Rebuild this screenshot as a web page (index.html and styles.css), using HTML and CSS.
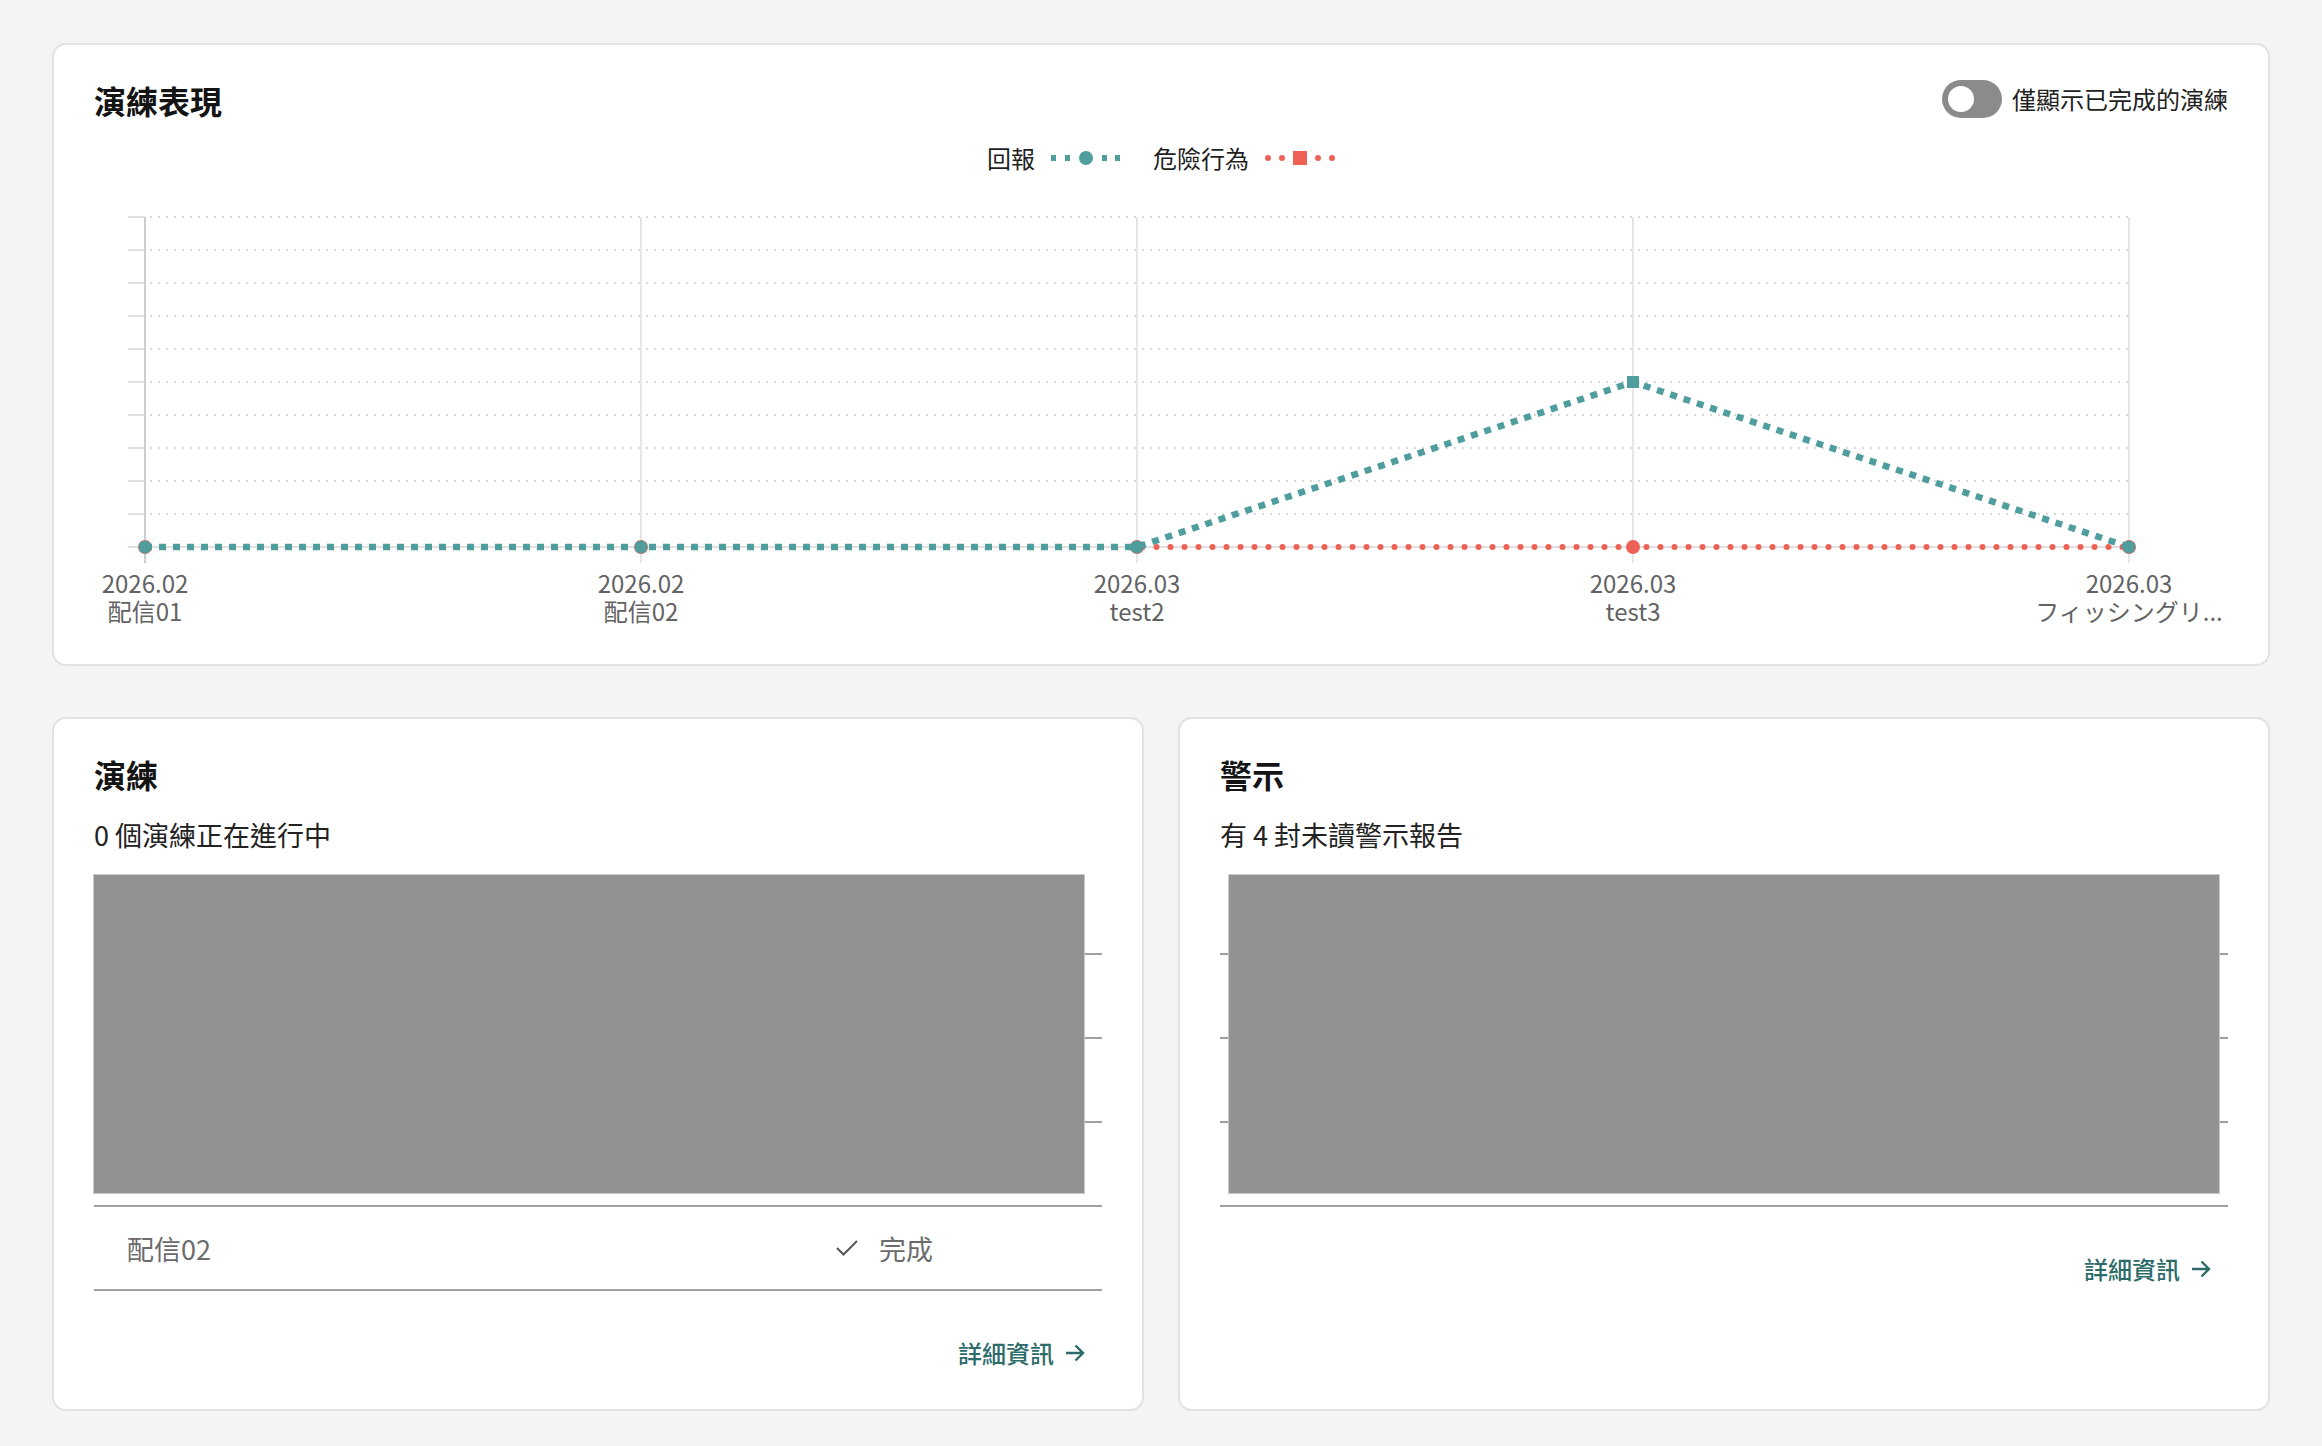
FILE: index.html
```html
<!DOCTYPE html>
<html lang="zh-Hant">
<head>
<meta charset="utf-8">
<title>Dashboard</title>
<link rel="stylesheet" href="styles.css">
</head>
<body>
<main class="page">
  <section class="card perf">
    <div class="card-head">
      <h2 class="card-title">演練表現</h2>
      <label class="toggle">
        <span class="switch"><span class="knob"></span></span>
        <span class="toggle-label">僅顯示已完成的演練</span>
      </label>
    </div>
    <div class="legend">
      <span class="legend-item">回報
        <svg class="swatch" width="70" height="20" viewBox="0 0 70 20">
          <rect x="0" y="7" width="5" height="6" fill="#4f9e9d"/>
          <rect x="14" y="7" width="5" height="6" fill="#4f9e9d"/>
          <circle cx="35" cy="10" r="7" fill="#4f9e9d"/>
          <rect x="51" y="7" width="5" height="6" fill="#4f9e9d"/>
          <rect x="64" y="7" width="5" height="6" fill="#4f9e9d"/>
        </svg>
      </span>
      <span class="legend-item">危險行為
        <svg class="swatch" width="70" height="20" viewBox="0 0 70 20">
          <circle cx="3" cy="10" r="3" fill="#ee6156"/>
          <circle cx="17" cy="10" r="3" fill="#ee6156"/>
          <rect x="28" y="3" width="14" height="14" fill="#ee6156"/>
          <circle cx="53" cy="10" r="3" fill="#ee6156"/>
          <circle cx="67" cy="10" r="3" fill="#ee6156"/>
        </svg>
      </span>
    </div>
    <svg class="chart" width="2134" height="393" viewBox="94 175 2134 393">
      <g class="grid-ticks" stroke="#e0e0e0" stroke-width="2">
        <line x1="128" y1="217" x2="145" y2="217"/>
        <line x1="128" y1="250" x2="145" y2="250"/>
        <line x1="128" y1="283" x2="145" y2="283"/>
        <line x1="128" y1="316" x2="145" y2="316"/>
        <line x1="128" y1="349" x2="145" y2="349"/>
        <line x1="128" y1="382" x2="145" y2="382"/>
        <line x1="128" y1="415" x2="145" y2="415"/>
        <line x1="128" y1="448" x2="145" y2="448"/>
        <line x1="128" y1="481" x2="145" y2="481"/>
        <line x1="128" y1="514" x2="145" y2="514"/>
        <line x1="128" y1="547" x2="2129" y2="547"/>
      </g>
      <g class="grid-dots" stroke="#d8d8d8" stroke-width="2" stroke-dasharray="2 6">
        <line x1="150" y1="217" x2="2129" y2="217"/>
        <line x1="150" y1="250" x2="2129" y2="250"/>
        <line x1="150" y1="283" x2="2129" y2="283"/>
        <line x1="150" y1="316" x2="2129" y2="316"/>
        <line x1="150" y1="349" x2="2129" y2="349"/>
        <line x1="150" y1="382" x2="2129" y2="382"/>
        <line x1="150" y1="415" x2="2129" y2="415"/>
        <line x1="150" y1="448" x2="2129" y2="448"/>
        <line x1="150" y1="481" x2="2129" y2="481"/>
        <line x1="150" y1="514" x2="2129" y2="514"/>
      </g>
      <g class="grid-v" stroke="#e6e6e6" stroke-width="2">
        <line x1="641" y1="217" x2="641" y2="563"/>
        <line x1="1137" y1="217" x2="1137" y2="563"/>
        <line x1="1633" y1="217" x2="1633" y2="563"/>
        <line x1="2129" y1="217" x2="2129" y2="563"/>
      </g>
      <line x1="145" y1="217" x2="145" y2="563" stroke="#cdcdcd" stroke-width="2"/>

      <line x1="145" y1="547" x2="2129" y2="547" stroke="#ee6156" stroke-width="6" stroke-linecap="round" stroke-dasharray="0 14" stroke-dashoffset="-3.5"/>
      <g fill="#ee6156">
        <circle cx="145" cy="547" r="7"/>
        <circle cx="641" cy="547" r="7"/>
        <circle cx="1137" cy="547" r="7"/>
        <circle cx="1633" cy="547" r="7"/>
        <circle cx="2129" cy="547" r="7"/>
      </g>
      <polyline points="145,547 641,547 1137,547 1633,382 2129,547" fill="none" stroke="#4f9e9d" stroke-width="6.5" stroke-dasharray="7 7"/>
      <g fill="#4f9e9d">
        <circle cx="145" cy="547" r="6.5"/>
        <circle cx="641" cy="547" r="6.5"/>
        <circle cx="1137" cy="547" r="6.5"/>
        <rect x="1627" y="376" width="12" height="12"/>
        <circle cx="2129" cy="547" r="6.5"/>
      </g>
    </svg>
    <div class="x-labels">
      <div class="x-label"><p class="x-text">2026.02<br>配信01</p></div>
      <div class="x-label"><p class="x-text">2026.02<br>配信02</p></div>
      <div class="x-label"><p class="x-text">2026.03<br>test2</p></div>
      <div class="x-label"><p class="x-text">2026.03<br>test3</p></div>
      <div class="x-label"><p class="x-text">2026.03<br>フィッシングリ...</p></div>
    </div>
  </section>

  <div class="row">
    <section class="card">
      <h2 class="card-title">演練</h2>
      <p class="summary">0 個演練正在進行中</p>
      <div class="table">
        <div class="tr th"></div>
        <div class="tr"></div>
        <div class="tr"></div>
        <div class="tr"></div>
        <div class="tr">
          <span class="cell-name">配信02</span>
          <span class="cell-status">
            <svg class="check" width="24" height="20" viewBox="0 0 24 20"><polyline points="2,10 8.5,16.5 22,3" fill="none" stroke="#555" stroke-width="2"/></svg>
            完成
          </span>
        </div>
        <div class="redact redact-left"></div>
      </div>
      <div class="more">
        <a class="more-link" href="#">詳細資訊
          <svg width="22" height="20" viewBox="0 0 22 20"><path d="M2 10 H19 M11.5 2.5 L19 10 L11.5 17.5" fill="none" stroke="#2d6a6a" stroke-width="2.4"/></svg>
        </a>
      </div>
    </section>

    <section class="card">
      <h2 class="card-title">警示</h2>
      <p class="summary">有 4 封未讀警示報告</p>
      <div class="table">
        <div class="tr th"></div>
        <div class="tr"></div>
        <div class="tr"></div>
        <div class="tr"></div>
        <div class="redact redact-right"></div>
      </div>
      <div class="more">
        <a class="more-link" href="#">詳細資訊
          <svg width="22" height="20" viewBox="0 0 22 20"><path d="M2 10 H19 M11.5 2.5 L19 10 L11.5 17.5" fill="none" stroke="#2d6a6a" stroke-width="2.4"/></svg>
        </a>
      </div>
    </section>
  </div>
</main>
</body>
</html>
```

FILE: styles.css
```css
* {
  box-sizing: border-box;
}

html,
body {
  margin: 0;
  padding: 0;
}

body {
  background: #f3f4f3;
  font-family: "Noto Sans CJK TC", "Noto Sans", sans-serif;
  color: #1a1a1a;
}

.page {
  padding: 43px 52px 35px;
  display: flex;
  flex-direction: column;
  gap: 51px;
}

.card {
  background: #fff;
  border: 2px solid #e1e2e1;
  border-radius: 14px;
  padding: 37px 40px 40px 40px;
}

.perf {
  padding-bottom: 39px;
}

.card-head {
  display: flex;
  justify-content: space-between;
  align-items: center;
  height: 36px;
}

.card-title {
  margin: 0;
  font-size: 32px;
  line-height: 36px;
  font-weight: 700;
  color: #141414;
}

.toggle {
  display: flex;
  align-items: center;
  gap: 10px;
  margin-top: -2px;
  font-size: 24px;
  line-height: 32px;
  color: #222;
}

.switch {
  width: 60px;
  height: 38px;
  border-radius: 19px;
  background: #8b8b8b;
  display: flex;
  align-items: center;
  padding: 0 6px;
}

.knob {
  width: 26px;
  height: 26px;
  border-radius: 50%;
  background: #fff;
}

.legend {
  display: flex;
  justify-content: center;
  align-items: center;
  gap: 32px;
  margin-top: 24px;
  height: 32px;
  font-size: 24px;
  line-height: 32px;
  color: #1f1f1f;
}

.legend-item {
  display: flex;
  align-items: center;
  gap: 16px;
}

.swatch {
  display: block;
}

.chart {
  display: block;
  margin-top: 1px;
  width: 2134px;
  height: 393px;
  overflow: visible;
}

.x-labels {
  display: flex;
  justify-content: space-between;
  margin: 1px 99px 0 51px;
  font-size: 24px;
  line-height: 28px;
  color: #636363;
}

.x-label {
  width: 0;
  display: flex;
  flex-direction: column;
  align-items: center;
}

.x-text {
  margin: 0;
  white-space: nowrap;
  text-align: center;
}

.row {
  display: grid;
  grid-template-columns: 1fr 1fr;
  gap: 34px;
}

.summary {
  margin: 27px 0 0;
  font-size: 27px;
  line-height: 32px;
  color: #222;
}

.table {
  position: relative;
  margin-top: 23px;
}

.tr {
  height: 84px;
  border-bottom: 2px solid #a0a0a0;
  display: grid;
  grid-template-columns: 1fr 267px;
  align-items: center;
}

.tr.th {
  height: 81px;
}

.cell-name {
  padding-left: 33px;
  font-size: 27px;
  color: #6b6b6b;
}

.cell-status {
  display: flex;
  align-items: center;
  gap: 20px;
  font-size: 27px;
  color: #6b6b6b;
}

.check {
  display: block;
}

.redact {
  position: absolute;
  top: 0;
  width: 992px;
  height: 320px;
  background: #929292;
  border: 1px solid #c9c9c9;
}

.redact-left {
  left: -1px;
}

.redact-right {
  left: 8px;
}

.more {
  display: flex;
  justify-content: flex-end;
  margin-top: 46px;
  padding-right: 16px;
}

.more-link {
  display: flex;
  align-items: center;
  gap: 10px;
  font-size: 24px;
  line-height: 32px;
  font-weight: 500;
  color: #2d6a6a;
  text-decoration: none;
}

.more-link svg {
  display: block;
}
```
